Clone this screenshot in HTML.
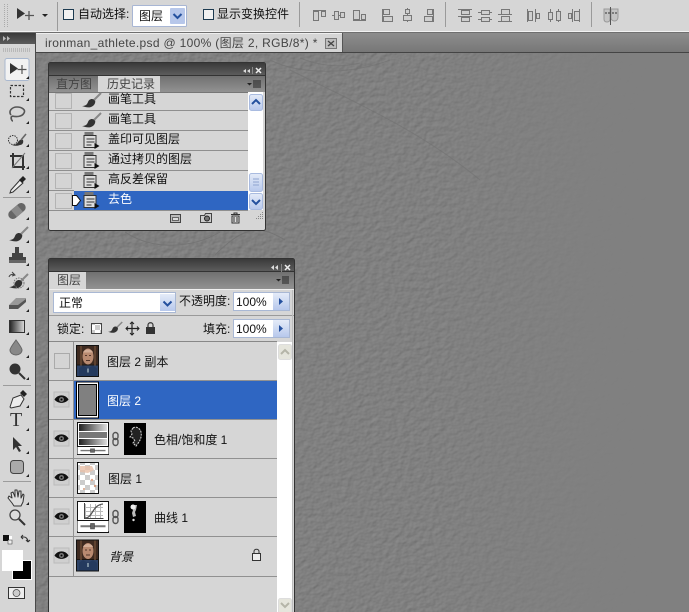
<!DOCTYPE html>
<html><head><meta charset="utf-8">
<style>
html,body{margin:0;padding:0;background:#808080}
#p{position:relative;width:689px;height:612px;overflow:hidden;font-family:"Liberation Sans","Noto Sans CJK SC",sans-serif;font-size:12px;color:#111}
#p svg{position:absolute;left:0;top:0}
.t{position:absolute;white-space:nowrap;line-height:14px;height:14px}
.w{color:#fff}
.g{color:#444}
</style></head><body>
<div id="p">
<svg width="689" height="612" viewBox="0 0 689 612">
<defs>
<filter id="tex" x="0" y="0" width="100%" height="100%" color-interpolation-filters="sRGB">
<feTurbulence type="fractalNoise" baseFrequency="0.16 0.2" numOctaves="2" seed="8"/>
<feDiffuseLighting surfaceScale="0.55" diffuseConstant="1" lighting-color="#949494"><feDistantLight azimuth="225" elevation="60"/></feDiffuseLighting>
</filter>
<linearGradient id="fade" x1="0" x2="1" y1="0" y2="0"><stop offset="0" stop-color="#808080" stop-opacity=".25"/><stop offset=".6" stop-color="#808080" stop-opacity=".35"/><stop offset=".85" stop-color="#808080" stop-opacity=".92"/><stop offset="1" stop-color="#808080"/></linearGradient>
<linearGradient id="hdr" x1="0" x2="0" y1="0" y2="1"><stop offset="0" stop-color="#3a3a3a"/><stop offset="1" stop-color="#5c5c5c"/></linearGradient>
<linearGradient id="tabs" x1="0" x2="0" y1="0" y2="1"><stop offset="0" stop-color="#6e6e6e"/><stop offset="1" stop-color="#929292"/></linearGradient>
<linearGradient id="tabbar" x1="0" x2="0" y1="0" y2="1"><stop offset="0" stop-color="#8d8d8d"/><stop offset="1" stop-color="#777"/></linearGradient>
<linearGradient id="btn" x1="0" x2="0" y1="0" y2="1"><stop offset="0" stop-color="#e4ebf8"/><stop offset="1" stop-color="#b7c8ec"/></linearGradient>
<linearGradient id="grad" x1="0" x2="1" y1="0" y2="0"><stop offset="0" stop-color="#222"/><stop offset="1" stop-color="#ddd"/></linearGradient>
<pattern id="chk" width="10" height="10" patternUnits="userSpaceOnUse"><rect width="10" height="10" fill="#fff"/><rect width="5" height="5" fill="#ccc"/><rect x="5" y="5" width="5" height="5" fill="#ccc"/></pattern>
<g id="brush"><path d="M0 13c3 0 5-1 6-4 1-3 4-4 7-2 1 3-1 6-4 7-3 1-6 0-9-1z" fill="#333"/><path d="M12 7L19 0" stroke="#888" stroke-width="2"/></g>
<g id="doc"><rect x="1" y="0" width="9" height="4" fill="#777"/><path d="M0.5 3.5h12v12h-12z" fill="#ddd" stroke="#333"/><path d="M3 7h8M3 10h8M3 13h5" stroke="#333"/><path d="M11 11l5 3-5 3z" fill="#111"/></g>
<g id="eye"><rect x="-9" y="-8" width="15" height="15" fill="#cfcfcf" stroke="#bbb" transform="translate(1.5 .5)"/><path d="M-7 0c3-5.500 11-5.500 14 0-3 4.500-11 4.500-14 0z" fill="#111"/><circle r="2.500" fill="#777"/><circle r="1" fill="#000"/></g>
<g id="por">
<rect width="22" height="31" fill="#1c1510"/>
<rect x="0" y="0" width="22" height="19" fill="#3e2a20"/>
<path d="M4 0v20M18 0v20" stroke="#6a4a34" stroke-width="1.500"/>
<rect x="0" y="20" width="22" height="11" fill="#2d4266"/>
<ellipse cx="11" cy="11" rx="5.500" ry="8" fill="#b98a70"/>
<path d="M6 7c1-4 9-4 10 0z" fill="#d3ad96"/>
<path d="M8 10h2M12 10h2M9 15h4" stroke="#54362a"/>
<path d="M6 20l5 3 5-3 4 3v8H2v-8z" fill="#243a5e"/>
<path d="M11 23v4" stroke="#cdd" stroke-width="1"/>
</g>
<g id="sl"><path d="M0 0h31v13H0z" fill="#fff"/><path d="M3 6.500h25" stroke="#777" stroke-width="2.500"/><rect x="13" y="3" width="4" height="7" fill="#666" stroke="#333" stroke-width=".5"/></g>
<g id="chev"><path d="M-4 1.500L0-2.500 4 1.500" fill="none" stroke="#24509e" stroke-width="2"/></g>
<g id="chain"><rect x="-2.500" y="-7" width="5" height="7" rx="2.500" fill="none" stroke="#555" stroke-width="1.400"/><rect x="-2.500" y="-1" width="5" height="7" rx="2.500" fill="none" stroke="#555" stroke-width="1.400"/></g>
</defs>

<!-- canvas -->
<rect x="36" y="53" width="653" height="559" fill="#808080"/>
<rect x="36" y="53" width="653" height="559" filter="url(#tex)"/>
<rect x="36" y="53" width="653" height="559" fill="url(#fade)"/>
<path d="M125 232c30 20 70 15 95 0M215 255c30-30 45-30 70-15" fill="none" stroke="#747474"/>
<path d="M270 60c30 15 80 15 120 0M290 70c60 30 130 60 190 110M300 58c20 8 40 10 60 5" fill="none" stroke="#727272" opacity=".6"/>

<!-- top bar -->
<rect x="0" y="0" width="689" height="32" fill="#d6d6d6"/>
<rect x="0" y="31" width="689" height="1" fill="#f2f2f2"/>
<rect x="0" y="32" width="689" height="1" fill="#6f6f6f"/>
<rect x="36" y="33" width="653" height="19" fill="url(#tabbar)"/>
<rect x="36" y="52" width="653" height="1" fill="#444"/>
<rect x="36" y="33" width="306" height="19" fill="#d5d5d5"/>
<rect x="36" y="33" width="306" height="1" fill="#eee"/>
<rect x="342" y="33" width="1" height="19" fill="#555"/>
<!-- close tab -->
<rect x="325.500" y="38.500" width="11" height="10" fill="#bdbdbd" stroke="#777"/>
<path d="M328 41l6 5M334 41l-6 5" stroke="#444" stroke-width="1.300"/>
<!-- grip -->
<path d="M4.500 4v24M7.500 4v24" stroke="#aaa" stroke-dasharray="1 1"/>
<!-- move tool -->
<path d="M17 8v11l8-5.500z" fill="#333"/>
<path d="M29 11v9M25 15.500h9" stroke="#555" stroke-width="1.300"/>
<path d="M42 14h6l-3 3z" fill="#222"/>
<path d="M57.500 2v29M299.500 2v25M445.500 2v25M591.500 2v25" stroke="#9a9a9a"/>
<!-- checkboxes -->
<rect x="63.500" y="9.500" width="10" height="10" fill="#f1f1f1" stroke="#1c3a50"/>
<rect x="203.500" y="9.500" width="10" height="10" fill="#f1f1f1" stroke="#1c3a50"/>
<!-- select -->
<rect x="132.500" y="5.500" width="54" height="21" rx="1" fill="#fff" stroke="#a8b6d4"/>
<rect x="170" y="8" width="15" height="16" rx="1" fill="#b7c7ea"/>
<use href="#chev" transform="translate(177.500 15.500) rotate(180)"/>
<!-- align icons -->
<g fill="#cfcfcf" stroke="#777">
<g transform="translate(313 10)"><path d="M0 .5h13" /><rect x=".5" y="1.500" width="5" height="9"/><rect x="8.500" y="1.500" width="4" height="5"/></g>
<g transform="translate(332 11)"><path d="M0 4.500h13" /><rect x="2.500" y=".5" width="4" height="8"/><rect x="8.500" y="1.500" width="4" height="5"/></g>
<g transform="translate(353 10)"><path d="M0 10.500h13"/><rect x=".5" y=".5" width="6" height="9"/><rect x="8.500" y="4.500" width="4" height="5"/></g>
<g transform="translate(382 9)"><path d="M.5 0v13"/><rect x="1.500" y=".5" width="6" height="5"/><rect x="1.500" y="7.500" width="9" height="5"/></g>
<g transform="translate(402 8)"><path d="M5.500 0v14"/><rect x="3.500" y="1.500" width="4" height="4"/><rect x="1.500" y="7.500" width="8" height="5"/></g>
<g transform="translate(423 9)"><path d="M10.500 0v13"/><rect x="4.500" y=".5" width="5" height="5"/><rect x="1.500" y="7.500" width="8" height="5"/></g>
<g transform="translate(458 9)"><path d="M0 .5h14M0 7.500h14"/><rect x="3.500" y="1.500" width="8" height="4"/><rect x="3.500" y="8.500" width="8" height="4"/></g>
<g transform="translate(478 9)"><path d="M0 3.500h14M0 10.500h14"/><rect x="3.500" y="1.500" width="8" height="4"/><rect x="3.500" y="8.500" width="8" height="4"/></g>
<g transform="translate(498 9)"><path d="M0 5.500h14M0 12.500h14"/><rect x="3.500" y=".5" width="8" height="5" /><rect x="3.500" y="7.500" width="8" height="5"/></g>
<g transform="translate(527 9)"><path d="M.5 0v13M8.500 0v13"/><rect x="1.500" y="2.500" width="4" height="9"/><rect x="9.500" y="4.500" width="3" height="5"/></g>
<g transform="translate(547 9)"><path d="M3.500 0v13M11.500 0v13"/><rect x="1.500" y="3.500" width="4" height="7"/><rect x="9.500" y="2.500" width="4" height="9"/></g>
<g transform="translate(567 9)"><path d="M5.500 0v13M12.500 0v13"/><rect x="1.500" y="4.500" width="3" height="5"/><rect x="7.500" y="2.500" width="5" height="9"/></g>
</g>
<!-- faces -->
<path d="M604 9h6v10c0 2-1 3-3 3s-3-1-3-3zM611 9h7v8c0 3-2 4-3.500 4S611 20 611 18z" fill="#c4c4c4" stroke="#999"/>
<path d="M610.500 7v18" stroke="#555"/>
<circle cx="606" cy="13" r="1" fill="#666"/><circle cx="609" cy="13" r="1" fill="#666"/><circle cx="613" cy="13" r="1" fill="#666"/><circle cx="616" cy="13" r="1" fill="#666"/>

<!-- left toolbar -->
<rect x="0" y="33" width="35" height="579" fill="#d6d6d6"/>
<rect x="0" y="33" width="35" height="11" fill="url(#hdr)"/>
<path d="M3 36l3 2.500-3 2.500zM7 36l3 2.500-3 2.500z" fill="#bbb"/>
<rect x="35" y="33" width="1" height="579" fill="#4a4a4a"/>
<path d="M3 49h28" stroke="#999" stroke-dasharray="1 1"/><path d="M3 51h28" stroke="#999" stroke-dasharray="1 1"/>
<rect x="5" y="58.500" width="24" height="22" rx="2" fill="#f2f2f2" stroke="#a9b8cf"/>
<path d="M10 63v11l8-5.500z" fill="#333"/>
<path d="M22 65v9M17.500 69.500h9" stroke="#555" stroke-width="1.200"/>
<path d="M3 197.500h28M3 385.500h28M3 481.500h28" stroke="#9c9c9c"/>
<!-- marquee -->
<rect x="10.500" y="85.500" width="13" height="11" fill="none" stroke="#333" stroke-width="1.200" stroke-dasharray="2.500 1.500"/>
<!-- lasso -->
<path d="M11 115c-3-4 1-8 6-8s9 3 7 6c-2 4-8 4-12 3M12 116c-2 2 0 5 1 5" fill="none" stroke="#555" stroke-width="1.600"/>
<!-- quick select -->
<circle cx="13" cy="140" r="4.500" fill="none" stroke="#333" stroke-dasharray="1.500 1"/>
<path d="M12 145c3 0 5-1 6-3s4-3 5-2c1 3-1 5-3 5-3 1-5 1-8 0z" fill="#333"/><path d="M21 140l5-6" stroke="#666" stroke-width="1.600"/>
<!-- crop -->
<path d="M13 153v14h12M10 156h13v14" fill="none" stroke="#333" stroke-width="2"/><path d="M12 168l13-15" stroke="#777"/>
<!-- eyedropper -->
<path d="M11 190l9-10 3 3-10 9-3 1z" fill="#eee" stroke="#333"/><path d="M19 180l4-4 3 3-4 4z" fill="#222"/>
<!-- heal -->
<g transform="rotate(-40 17 211)"><rect x="7" y="206.500" width="20" height="9" rx="4.500" fill="#666"/><rect x="13" y="206.500" width="8" height="9" fill="#8a8a8a"/></g>
<!-- brush -->
<use href="#brush" transform="translate(9 227)"/>
<!-- stamp -->
<path d="M15 247h4v6h4v4h3v4H9v-4h3v-4h3z" fill="#444"/><rect x="9" y="260" width="17" height="3" fill="#666"/>
<!-- history brush -->
<use href="#brush" transform="translate(9 274)"/><path d="M9 277c1-3 4-3 6-2M12 272l3 3-3 1" fill="none" stroke="#444"/><circle cx="19" cy="283" r="5" fill="none" stroke="#777" stroke-dasharray="1.500 1"/>
<!-- eraser -->
<path d="M9 305l7-7h10v3l-8 7H9z" fill="#999"/><path d="M9 305h9v4H9zM18 305l8-6v3l-8 7z" fill="#555"/>
<!-- gradient -->
<rect x="9.500" y="320.500" width="15" height="12" fill="url(#grad)" stroke="#333"/>
<!-- drop -->
<path d="M16 340c-3 4-6 8-6 10 0 3 3 5 6 5s6-2 6-5c0-2-3-6-6-10z" fill="#888" stroke="#666"/>
<!-- burn -->
<circle cx="15" cy="369" r="5.500" fill="#333"/><path d="M19 373l6 6" stroke="#333" stroke-width="2"/>
<!-- pen -->
<path d="M10 407l3-9 8-3 3 4-4 7-9 2z" fill="#ececec" stroke="#333"/><path d="M20 393l3-3 4 4-3 3z" fill="#222"/>
<path d="M13 438v13l3-3 3 5 2-1-3-5h4z" fill="#333" transform="translate(0 -1)"/>
<rect x="10.500" y="460.500" width="13" height="13" rx="3" fill="#aaa" stroke="#444"/>
<!-- hand -->
<path d="M12 503l-4-5 1-2 3 2-1-5 2-1 2 5 0-7h2l1 7 1-6h2l0 7 2-4 1 1-1 7-2 4h-7z" fill="#ddd" stroke="#333" stroke-linejoin="round"/>
<!-- zoom -->
<circle cx="15" cy="515" r="5" fill="#ddd" stroke="#444" stroke-width="1.300"/><path d="M19 519l6 6" stroke="#333" stroke-width="2"/>
<!-- small colors -->
<rect x="7" y="536" width="5" height="5" fill="#fff"/><rect x="3" y="535" width="6" height="6" fill="#111"/><rect x="8" y="540" width="4" height="4" fill="#eee" stroke="#333" stroke-width=".5"/>
<path d="M21 537h3c2 0 4 2 4 5M21 537l2-2M21 537l2 2M28 542l-2-2M28 542l2-2" fill="none" stroke="#333" stroke-width="1.100"/>
<rect x="12.500" y="560.500" width="19" height="19" fill="#000" stroke="#fff"/>
<rect x="2" y="550" width="21" height="21" fill="#fff"/>
<rect x="8.500" y="587.500" width="16" height="11" fill="#eee" stroke="#333"/><circle cx="16.500" cy="593" r="3.500" fill="#ccc" stroke="#444" stroke-width=".7"/>
<!-- flyout triangles -->
<g fill="#222">
<path d="M26 79l3 0 0-3zM26 101l3 0 0-3zM26 124h3v-3zM26 147h3v-3zM26 169h3v-3zM26 193h3v-3zM26 220h3v-3zM26 243h3v-3zM26 266h3v-3zM26 290h3v-3zM26 312h3v-3zM26 335h3v-3zM26 358h3v-3zM26 380h3v-3zM26 408h3v-3zM26 431h3v-3zM26 454h3v-3zM26 477h3v-3zM26 505h3v-3z"/>
</g>

<!-- history panel -->
<rect x="48.500" y="62.500" width="217" height="168" rx="2" fill="#d6d6d6" stroke="#333"/>
<rect x="49" y="63" width="216" height="12" fill="url(#hdr)"/>
<rect x="49" y="75" width="216" height="17" fill="url(#tabs)"/>
<rect x="49" y="75" width="216" height="1" fill="#333"/>
<rect x="98" y="76" width="62" height="16" fill="#d6d6d6"/>
<path d="M250 69l-3 2 3 2zM246 69l-3 2 3 2z" fill="#ddd"/><path d="M252.500 67v7" stroke="#888"/><path d="M256 68l5 5M261 68l-5 5" stroke="#eee" stroke-width="1.500"/>
<path d="M247 83h5l-2.500 2.500z" fill="#222"/><path d="M253 81h8M253 83h8M253 85h8M253 87h8" stroke="#222"/>
<rect x="49" y="92" width="199" height="118" fill="#d6d6d6"/>
<rect x="74" y="191" width="174" height="19" fill="#2f66c2"/>
<rect x="248" y="92" width="15" height="118" fill="#fff"/>
<g fill="none" stroke="#8f8f8f"><path d="M49 92.500h199M49 110.500h199M49 130.500h199M49 150.500h199M49 170.500h199M49 190.500h25M49 210.500h199"/></g>
<path d="M49 92.500h199" stroke="#777"/>
<g fill="#d4d4d4" stroke="#b3b3b3">
<rect x="55.500" y="93.500" width="16" height="15"/><rect x="55.500" y="113.500" width="16" height="15"/><rect x="55.500" y="133.500" width="16" height="15"/><rect x="55.500" y="153.500" width="16" height="15"/><rect x="55.500" y="173.500" width="16" height="15"/><rect x="55.500" y="193.500" width="16" height="15"/>
</g>
<path d="M72.500 195.500h4l4 5-4 5h-4z" fill="#fff" stroke="#111"/>
<svg x="0" y="0" width="689" height="612" style="overflow:hidden"><rect x="0" y="0" width="0" height="0"/></svg>
<use href="#brush" transform="translate(82 93)"/>
<use href="#brush" transform="translate(82 113)"/>
<use href="#doc" transform="translate(83.500 132)"/>
<use href="#doc" transform="translate(83.500 152)"/>
<use href="#doc" transform="translate(83.500 172)"/>
<use href="#doc" transform="translate(83.500 192)"/>
<!-- history scrollbar -->
<rect x="249.500" y="94.500" width="13" height="16" rx="2" fill="url(#btn)" stroke="#a9bbe0"/>
<use href="#chev" transform="translate(256 102.500)"/>
<rect x="249.500" y="173.500" width="13" height="18" rx="2" fill="url(#btn)" stroke="#a9bbe0"/>
<path d="M253 179h6M253 182h6M253 185h6" stroke="#8fa4cf"/>
<rect x="249.500" y="193.500" width="13" height="16" rx="2" fill="url(#btn)" stroke="#a9bbe0"/>
<use href="#chev" transform="translate(256 201.500) rotate(180)"/>
<!-- history footer -->
<rect x="170.500" y="214.500" width="10" height="8" fill="#bbb" stroke="#444"/><rect x="172.500" y="217.500" width="6" height="3" fill="#ddd" stroke="#666"/>
<path d="M200.500 215.500h4l1-2h6v9h-11z" fill="#ccc" stroke="#444"/><circle cx="207" cy="218.500" r="2.500" fill="#777" stroke="#222"/>
<path d="M231 214.500h9M232 216h7v7h-7z" fill="#ddd" stroke="#333"/><path d="M234 217v5M237 217v5" stroke="#333"/><path d="M234 214v-1h3v1" fill="none" stroke="#333"/>
<g fill="#888"><rect x="262" y="212" width="1" height="1"/><rect x="260" y="214" width="1" height="1"/><rect x="262" y="214" width="1" height="1"/><rect x="258" y="216" width="1" height="1"/><rect x="260" y="216" width="1" height="1"/><rect x="262" y="216" width="1" height="1"/><rect x="256" y="218" width="1" height="1"/><rect x="258" y="218" width="1" height="1"/><rect x="260" y="218" width="1" height="1"/><rect x="262" y="218" width="1" height="1"/></g>

<!-- layers panel -->
<rect x="48.500" y="258.500" width="246" height="360" rx="2" fill="#d6d6d6" stroke="#333"/>
<rect x="49" y="259" width="245" height="12" fill="url(#hdr)"/>
<rect x="49" y="271" width="245" height="18" fill="url(#tabs)"/>
<rect x="49" y="271" width="245" height="1" fill="#333"/>
<rect x="49" y="272" width="37" height="17" fill="#d6d6d6"/>
<path d="M274 265l-3 2.500 3 2.500zM278 265l-3 2.500 3 2.500z" fill="#ddd"/><path d="M281.500 264v8" stroke="#888"/><path d="M285 265l5 5M290 265l-5 5" stroke="#eee" stroke-width="1.500"/>
<path d="M276 279h5l-2.500 2.500z" fill="#222"/><path d="M282 277h7M282 279h7M282 281h7M282 283h7" stroke="#222"/>
<rect x="49" y="289" width="245" height="1" fill="#efefef"/>
<!-- blend select -->
<rect x="53.500" y="292.500" width="122" height="20" fill="#fff" stroke="#a9b8d4"/>
<rect x="160" y="294" width="15" height="17" fill="url(#btn)"/>
<use href="#chev" transform="translate(167.500 303) rotate(180)"/>
<!-- opacity -->
<rect x="233.500" y="292.500" width="56" height="18" fill="#fff" stroke="#a9b8d4"/>
<rect x="273" y="293" width="16" height="17" fill="url(#btn)"/>
<path d="M279 298l4 3.500-4 3.500z" fill="#24509e"/>
<path d="M49 315.500h245" stroke="#9a9a9a"/>
<!-- fill -->
<rect x="233.500" y="319.500" width="56" height="18" fill="#fff" stroke="#a9b8d4"/>
<rect x="273" y="320" width="16" height="17" fill="url(#btn)"/>
<path d="M279 325l4 3.500-4 3.500z" fill="#24509e"/>
<!-- lock icons -->
<rect x="91.500" y="323.500" width="10" height="10" fill="url(#chk)" stroke="#444"/>
<use href="#brush" transform="translate(108 322) scale(.75)"/>
<path d="M132 322v13M126 328.500h13" stroke="#222" stroke-width="1.200"/><path d="M130 324l2-2 2 2M130 333l2 2 2-2M128 326.500l-2 2 2 2M137 326.500l2 2-2 2" fill="none" stroke="#222"/>
<rect x="146" y="327" width="9" height="7" fill="#333"/><path d="M148 327v-2c0-3 5-3 5 0v2" fill="none" stroke="#333" stroke-width="1.200"/>
<!-- list -->
<path d="M49 341.500h228" stroke="#888"/>
<rect x="50" y="342" width="227" height="234" fill="#d6d6d6"/>
<rect x="74" y="381" width="203" height="38" fill="#2f66c2"/>
<rect x="277" y="342" width="15" height="270" fill="#fff"/>
<path d="M292.500 290v322" stroke="#bbb"/>
<g stroke="#919191"><path d="M49 380.500h228M49 419.500h228M49 458.500h228M49 497.500h228M49 536.500h228M49 576.500h228"/><path d="M73.500 342v234"/></g>
<rect x="278.500" y="344.500" width="13" height="15" rx="2" fill="#e5e5dc" stroke="#ddd"/>
<path d="M281 354l4-4 4 4" fill="none" stroke="#b5b5a8" stroke-width="2"/>
<rect x="278.500" y="598.500" width="13" height="15" rx="2" fill="#e5e5dc" stroke="#ddd"/>
<path d="M281 603l4 4 4-4" fill="none" stroke="#b5b5a8" stroke-width="2"/>
<rect x="54.500" y="353.500" width="15" height="15" fill="#d4d4d4" stroke="#aaa"/>
<use href="#eye" transform="translate(61.500 399.500)"/>
<use href="#eye" transform="translate(61.500 438.500)"/>
<use href="#eye" transform="translate(61.500 477.500)"/>
<use href="#eye" transform="translate(61.500 516.500)"/>
<use href="#eye" transform="translate(61.500 555.500)"/>
<!-- thumbs -->
<use href="#por" transform="translate(77 345.500)"/>
<rect x="76.500" y="345.500" width="22" height="31" fill="none" stroke="#111"/>
<rect x="76" y="381.500" width="23" height="37" fill="#000"/><rect x="77" y="382.500" width="21" height="35" fill="#fff"/><rect x="78" y="384" width="19" height="32" fill="#000"/><rect x="79" y="385" width="17" height="30" fill="#808080"/>
<rect x="77.500" y="422.500" width="31" height="32" fill="#fff" stroke="#111"/>
<rect x="79" y="424" width="28" height="7" fill="url(#grad)"/><rect x="79" y="432" width="28" height="6" fill="#777"/><rect x="79" y="439" width="28" height="6" fill="url(#grad)"/>
<rect x="78" y="446" width="30" height="1" fill="#111"/>
<use href="#sl" transform="translate(77.500 447) scale(1 .55)"/>
<use href="#chain" transform="translate(115.500 439.500)"/>
<rect x="124" y="423" width="22" height="32" fill="#000"/>
<path d="M133 428c3-2 7 0 8 4 1 5-1 8-2 10l-3 4-3-3 2-2-2-3-3-1 2-3-1-3z" fill="#222" stroke="#ccc" stroke-dasharray="2 1" stroke-width="1.100"/>
<rect x="77.500" y="462.500" width="21" height="31" fill="url(#chk)" stroke="#111"/>
<path d="M80 466h12l2 4-6 3-8-1z" fill="#e9bfa8" opacity=".8"/><circle cx="92" cy="480" r="1.200" fill="#e2a98c"/><circle cx="95" cy="486" r="1.200" fill="#d69e80"/><circle cx="84" cy="489" r="1" fill="#d69e80"/>
<rect x="77.500" y="501.500" width="31" height="31" fill="#fff" stroke="#111"/>
<rect x="78" y="520" width="30" height="1" fill="#111"/>
<g stroke="#bbb"><path d="M85.500 504v14M90.500 504v14M95.500 504v14M100.500 504v14M84 507.500h19M84 511.500h19M84 515.500h19"/></g>
<path d="M84.500 503v15.500h19" fill="none" stroke="#444"/>
<path d="M85 518c8 0 7-13 18-14" fill="none" stroke="#555" stroke-width="1.300"/>
<use href="#sl" transform="translate(77.500 521) scale(1 .8)"/>
<use href="#chain" transform="translate(115.500 517.500)"/>
<rect x="124" y="501" width="22" height="32" fill="#000"/>
<path d="M131 505h6l-1 5-1 2 1 4-3 1-1-4 1-3z" fill="#bbb"/><circle cx="133" cy="507" r="2.500" fill="#eee"/><circle cx="133.500" cy="520" r="1.200" fill="#ddd"/>
<use href="#por" transform="translate(77 540)"/>
<rect x="76.500" y="540" width="22" height="31" fill="none" stroke="#111"/>
<!-- bg lock -->
<rect x="252.500" y="553.500" width="8" height="7" fill="#eee" stroke="#333"/><path d="M254 553v-1.500c0-3 5-3 5 0v1.500" fill="none" stroke="#333"/>
</svg>

<div class="t" style="left:78px;top:7px">自动选择:</div>
<div class="t" style="left:139px;top:9px">图层</div>
<div class="t" style="left:217px;top:7px">显示变换控件</div>
<div class="t g" style="left:45px;top:36px;letter-spacing:.32px">ironman_athlete.psd @ 100% (图层 2, RGB/8*) *</div>
<div class="t" style="left:10px;top:410px;font:20px/20px 'Liberation Serif',serif;height:20px;color:#333">T</div>

<div class="t g" style="left:56px;top:77px">直方图</div>
<div class="t g" style="left:107px;top:77px">历史记录</div>
<div class="t" style="left:108px;top:92px">画笔工具</div>
<div class="t" style="left:108px;top:112px">画笔工具</div>
<div class="t" style="left:108px;top:132px">盖印可见图层</div>
<div class="t" style="left:108px;top:152px">通过拷贝的图层</div>
<div class="t" style="left:108px;top:172px">高反差保留</div>
<div class="t w" style="left:108px;top:192px">去色</div>

<div class="t g" style="left:57px;top:273px">图层</div>
<div class="t" style="left:59px;top:296px">正常</div>
<div class="t" style="left:179px;top:294px">不透明度:</div>
<div class="t" style="left:236px;top:295px">100%</div>
<div class="t" style="left:57px;top:322px">锁定:</div>
<div class="t" style="left:203px;top:322px">填充:</div>
<div class="t" style="left:236px;top:322px">100%</div>
<div class="t" style="left:107px;top:355px">图层 2 副本</div>
<div class="t w" style="left:107px;top:394px">图层 2</div>
<div class="t" style="left:154px;top:433px">色相/饱和度 1</div>
<div class="t" style="left:108px;top:472px">图层 1</div>
<div class="t" style="left:154px;top:511px">曲线 1</div>
<div class="t" style="left:109px;top:550px;font-style:italic">背景</div>
</div>
</body></html>
